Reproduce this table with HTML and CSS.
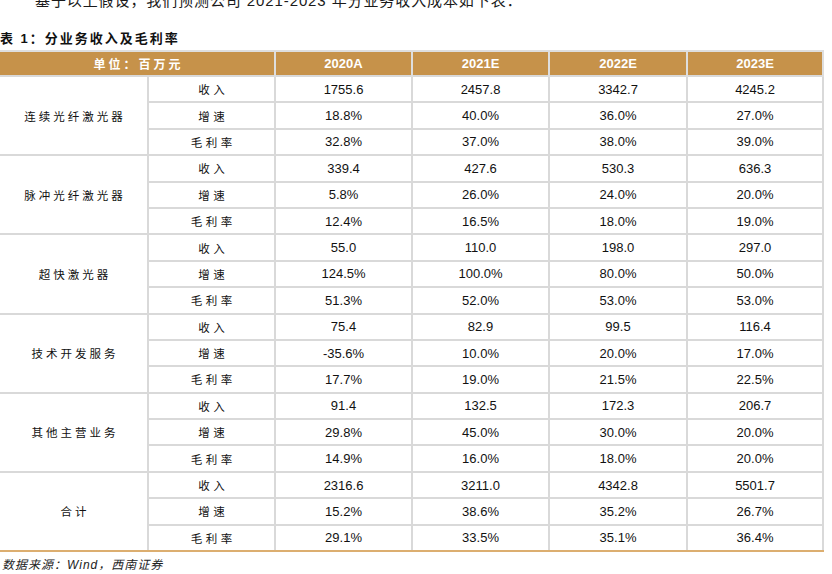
FILE: index.html
```html
<!DOCTYPE html>
<html lang="zh-CN">
<head>
<meta charset="utf-8">
<title>分业务收入及毛利率</title>
<link rel="stylesheet" href="styles.css">
</head>
<body>
<p class="lead">基于以上假设，我们预测公司 2021-2023 年分业务收入成本如下表：</p>
<p class="caption">表 1：分业务收入及毛利率</p>
<table class="fin">
  <colgroup>
    <col class="c-group"><col class="c-item"><col class="c-y1"><col class="c-y2"><col class="c-y3"><col class="c-y4">
  </colgroup>
  <thead>
    <tr><th colspan="2" class="unit">单位：百万元</th><th>2020A</th><th>2021E</th><th>2022E</th><th>2023E</th></tr>
  </thead>
  <tbody>
    <tr><td rowspan="3" class="grp">连续光纤激光器</td><td class="lbl">收入</td><td>1755.6</td><td>2457.8</td><td>3342.7</td><td>4245.2</td></tr>
    <tr><td class="lbl">增速</td><td>18.8%</td><td>40.0%</td><td>36.0%</td><td>27.0%</td></tr>
    <tr><td class="lbl">毛利率</td><td>32.8%</td><td>37.0%</td><td>38.0%</td><td>39.0%</td></tr>

    <tr><td rowspan="3" class="grp">脉冲光纤激光器</td><td class="lbl">收入</td><td>339.4</td><td>427.6</td><td>530.3</td><td>636.3</td></tr>
    <tr><td class="lbl">增速</td><td>5.8%</td><td>26.0%</td><td>24.0%</td><td>20.0%</td></tr>
    <tr><td class="lbl">毛利率</td><td>12.4%</td><td>16.5%</td><td>18.0%</td><td>19.0%</td></tr>

    <tr><td rowspan="3" class="grp">超快激光器</td><td class="lbl">收入</td><td>55.0</td><td>110.0</td><td>198.0</td><td>297.0</td></tr>
    <tr><td class="lbl">增速</td><td>124.5%</td><td>100.0%</td><td>80.0%</td><td>50.0%</td></tr>
    <tr><td class="lbl">毛利率</td><td>51.3%</td><td>52.0%</td><td>53.0%</td><td>53.0%</td></tr>

    <tr><td rowspan="3" class="grp">技术开发服务</td><td class="lbl">收入</td><td>75.4</td><td>82.9</td><td>99.5</td><td>116.4</td></tr>
    <tr><td class="lbl">增速</td><td>-35.6%</td><td>10.0%</td><td>20.0%</td><td>17.0%</td></tr>
    <tr><td class="lbl">毛利率</td><td>17.7%</td><td>19.0%</td><td>21.5%</td><td>22.5%</td></tr>

    <tr><td rowspan="3" class="grp">其他主营业务</td><td class="lbl">收入</td><td>91.4</td><td>132.5</td><td>172.3</td><td>206.7</td></tr>
    <tr><td class="lbl">增速</td><td>29.8%</td><td>45.0%</td><td>30.0%</td><td>20.0%</td></tr>
    <tr><td class="lbl">毛利率</td><td>14.9%</td><td>16.0%</td><td>18.0%</td><td>20.0%</td></tr>

    <tr><td rowspan="3" class="grp">合计</td><td class="lbl">收入</td><td>2316.6</td><td>3211.0</td><td>4342.8</td><td>5501.7</td></tr>
    <tr><td class="lbl">增速</td><td>15.2%</td><td>38.6%</td><td>35.2%</td><td>26.7%</td></tr>
    <tr class="last"><td class="lbl">毛利率</td><td>29.1%</td><td>33.5%</td><td>35.1%</td><td>36.4%</td></tr>
  </tbody>
</table>
<p class="source">数据来源：Wind，西南证券</p>
</body>
</html>
```

FILE: styles.css
```css
html, body {
  margin: 0;
  padding: 0;
  background: #ffffff;
}

body {
  width: 832px;
  height: 574px;
  overflow: hidden;
  font-family: "Liberation Sans", "Noto Sans CJK SC", sans-serif;
  color: #111111;
}

.lead {
  margin: -10px 0 0 0;
  padding-left: 35px;
  font-size: 15px;
  line-height: 22px;
  letter-spacing: 0.9px;
  color: #1a1a1a;
}

.caption {
  margin: 19px 0 0 0;
  font-size: 13px;
  line-height: 16px;
  font-weight: bold;
  letter-spacing: 2px;
  color: #111111;
}

.fin {
  margin-top: 3px;
  width: 823px;
  table-layout: fixed;
  border-collapse: collapse;
}

.c-group { width: 148px; }
.c-item { width: 127px; }
.c-y1 { width: 137px; }
.c-y2 { width: 137px; }
.c-y3 { width: 138px; }
.c-y4 { width: 136px; }

.fin th {
  height: 23px;
  padding: 0;
  background: #c6924a;
  color: #ffffff;
  font-size: 13px;
  font-weight: bold;
  text-align: center;
  border: 2px solid #dedede;
  border-bottom: none;
}

.fin th:first-child {
  border-left: none;
}

.fin th.unit {
  font-size: 12px;
  letter-spacing: 3px;
  padding-left: 3px;
}

.fin td {
  height: 24.4px;
  padding: 0;
  font-size: 13px;
  text-align: center;
  border: 2px solid #d9d9d9;
  color: #111111;
}

.fin td.grp {
  border-left: none;
  font-size: 11.5px;
  letter-spacing: 3px;
  padding-left: 3px;
}

.fin td.lbl {
  font-size: 11.5px;
  letter-spacing: 3.5px;
  padding-left: 3.5px;
}

.fin tr.last td,
.fin tr:nth-last-child(3) td.grp {
  border-bottom: 2px solid #dcae70;
}

.source {
  margin: 5px 0 0 2px;
  font-size: 12px;
  line-height: 16px;
  font-style: italic;
  letter-spacing: 1px;
  color: #222222;
}
```
